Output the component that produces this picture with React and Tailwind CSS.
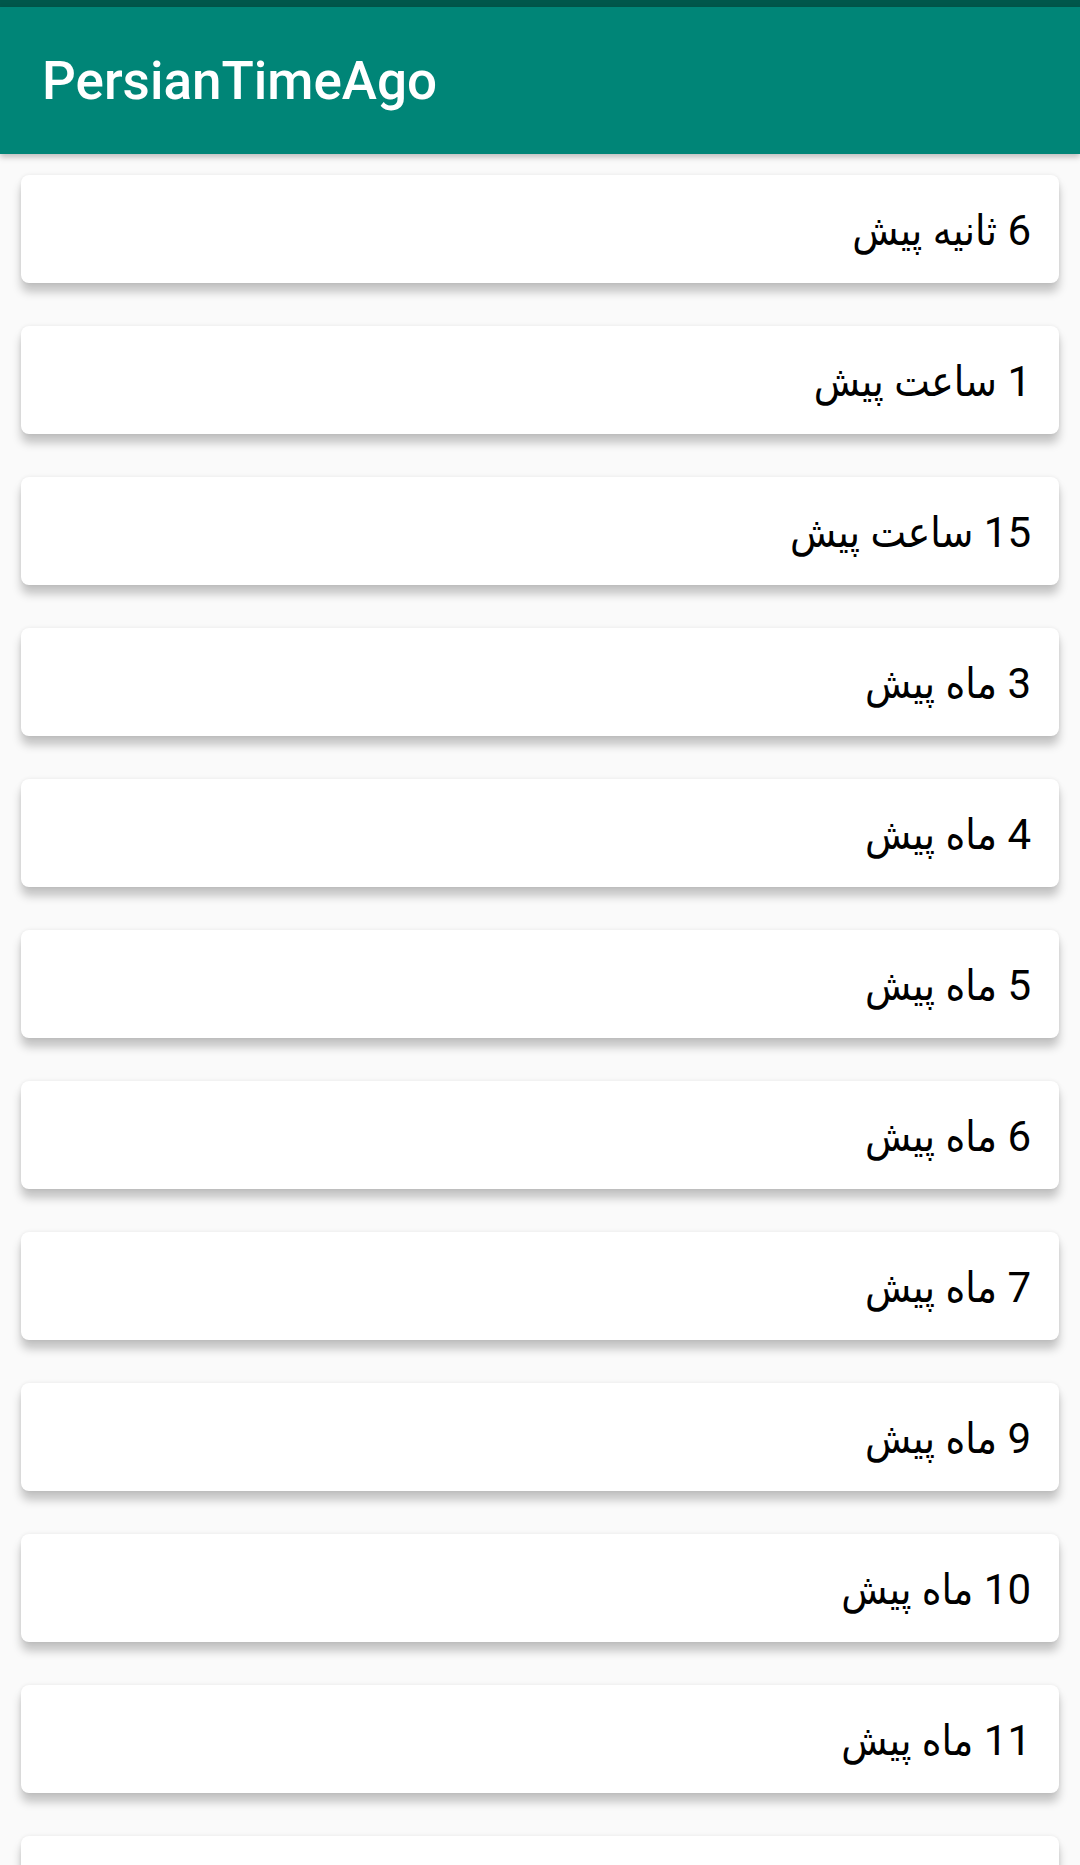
import React from 'react';

const items = [
  '6 ثانیه پیش',
  '1 ساعت پیش',
  '15 ساعت پیش',
  '3 ماه پیش',
  '4 ماه پیش',
  '5 ماه پیش',
  '6 ماه پیش',
  '7 ماه پیش',
  '9 ماه پیش',
  '10 ماه پیش',
  '11 ماه پیش',
  '',
];

const App = () => {
  return (
    <div className="w-[1080px] h-[1865px] overflow-hidden bg-[#fafafa] flex flex-col" style={{ fontFamily: "Roboto, 'DejaVu Sans Condensed', 'DejaVu Sans', sans-serif" }}>
      <div className="h-[7px] bg-[#00574b] shrink-0"></div>
      <div className="h-[147px] shrink-0 bg-[#008577] flex items-center px-[42px] shadow-[0_3px_6px_rgba(0,0,0,0.25)] relative z-10">
        <h1 className="text-white text-[53px] font-medium leading-none mt-[2px]">PersianTimeAgo</h1>
      </div>
      <div className="flex flex-col gap-[43px] px-[21px] pt-[21px]">
        {items.map((item, i) => (
          <div
            key={i}
            dir="rtl"
            className="h-[108px] shrink-0 bg-white rounded-[8px] flex items-center pr-[28px] pt-[4px] shadow-[0_9px_10px_rgba(0,0,0,0.22),0_0_4px_rgba(0,0,0,0.08)]"
          >
            <span className="text-[42px] text-black leading-none">{item}</span>
          </div>
        ))}
      </div>
    </div>
  );
};

export default App;
